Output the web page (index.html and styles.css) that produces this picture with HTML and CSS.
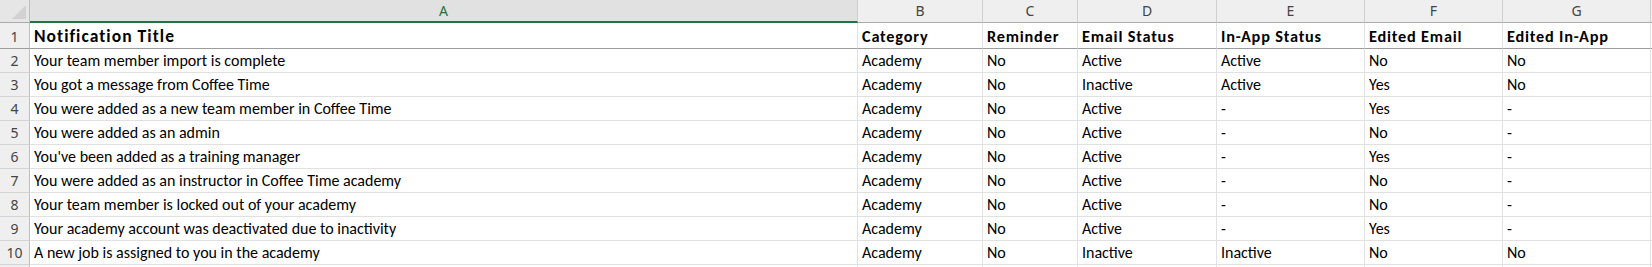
FILE: index.html
```html
<!DOCTYPE html>
<html>
<head>
<meta charset="utf-8">
<link rel="stylesheet" href="styles.css">
</head>
<body>
<div class="sheet">
  <div class="corner"><span class="tri"></span></div>
  <div class="colhead sel">A</div>
  <div class="colhead">B</div>
  <div class="colhead">C</div>
  <div class="colhead">D</div>
  <div class="colhead">E</div>
  <div class="colhead">F</div>
  <div class="colhead">G</div>
  <div class="colhead rest"></div>

  <div class="rowhead r1">1</div>
  <div class="cell hd big">Notification Title</div>
  <div class="cell hd">Category</div>
  <div class="cell hd">Reminder</div>
  <div class="cell hd">Email Status</div>
  <div class="cell hd">In-App Status</div>
  <div class="cell hd">Edited Email</div>
  <div class="cell hd">Edited In-App</div>
  <div class="cell hd rest"></div>

  <div class="rowhead">2</div>
  <div class="cell">Your team member import is complete</div>
  <div class="cell">Academy</div>
  <div class="cell">No</div>
  <div class="cell">Active</div>
  <div class="cell">Active</div>
  <div class="cell">No</div>
  <div class="cell">No</div>
  <div class="cell rest"></div>

  <div class="rowhead">3</div>
  <div class="cell">You got a message from Coffee Time</div>
  <div class="cell">Academy</div>
  <div class="cell">No</div>
  <div class="cell">Inactive</div>
  <div class="cell">Active</div>
  <div class="cell">Yes</div>
  <div class="cell">No</div>
  <div class="cell rest"></div>

  <div class="rowhead">4</div>
  <div class="cell">You were added as a new team member in Coffee Time</div>
  <div class="cell">Academy</div>
  <div class="cell">No</div>
  <div class="cell">Active</div>
  <div class="cell">-</div>
  <div class="cell">Yes</div>
  <div class="cell">-</div>
  <div class="cell rest"></div>

  <div class="rowhead">5</div>
  <div class="cell">You were added as an admin</div>
  <div class="cell">Academy</div>
  <div class="cell">No</div>
  <div class="cell">Active</div>
  <div class="cell">-</div>
  <div class="cell">No</div>
  <div class="cell">-</div>
  <div class="cell rest"></div>

  <div class="rowhead">6</div>
  <div class="cell">You've been added as a training manager</div>
  <div class="cell">Academy</div>
  <div class="cell">No</div>
  <div class="cell">Active</div>
  <div class="cell">-</div>
  <div class="cell">Yes</div>
  <div class="cell">-</div>
  <div class="cell rest"></div>

  <div class="rowhead">7</div>
  <div class="cell">You were added as an instructor in Coffee Time academy</div>
  <div class="cell">Academy</div>
  <div class="cell">No</div>
  <div class="cell">Active</div>
  <div class="cell">-</div>
  <div class="cell">No</div>
  <div class="cell">-</div>
  <div class="cell rest"></div>

  <div class="rowhead">8</div>
  <div class="cell">Your team member is locked out of your academy</div>
  <div class="cell">Academy</div>
  <div class="cell">No</div>
  <div class="cell">Active</div>
  <div class="cell">-</div>
  <div class="cell">No</div>
  <div class="cell">-</div>
  <div class="cell rest"></div>

  <div class="rowhead">9</div>
  <div class="cell">Your academy account was deactivated due to inactivity</div>
  <div class="cell">Academy</div>
  <div class="cell">No</div>
  <div class="cell">Active</div>
  <div class="cell">-</div>
  <div class="cell">Yes</div>
  <div class="cell">-</div>
  <div class="cell rest"></div>

  <div class="rowhead">10</div>
  <div class="cell">A new job is assigned to you in the academy</div>
  <div class="cell">Academy</div>
  <div class="cell">No</div>
  <div class="cell">Inactive</div>
  <div class="cell">Inactive</div>
  <div class="cell">No</div>
  <div class="cell">No</div>
  <div class="cell rest"></div>

  <div class="rowhead tail"></div>
  <div class="cell tail"></div>
  <div class="cell tail"></div>
  <div class="cell tail"></div>
  <div class="cell tail"></div>
  <div class="cell tail"></div>
  <div class="cell tail"></div>
  <div class="cell tail"></div>
  <div class="cell tail rest"></div>
</div>
</body>
</html>
```

FILE: styles.css
```css
html, body {
  margin: 0;
  padding: 0;
  background: #ffffff;
}

.sheet {
  display: grid;
  grid-template-columns: 30px 828px 125px 95px 139px 148px 138px 148px 1fr;
  grid-template-rows: 23px 26px repeat(9, 24px) 2px;
  width: 1652px;
  height: 267px;
  overflow: hidden;
  font-family: Carlito, Calibri, Lato, "Liberation Sans", sans-serif;
  font-size: 16px;
  color: #000000;
}

.corner {
  position: relative;
  background: #e6e6e6;
  border-right: 1px solid #bfbfbf;
  border-bottom: 1px solid #ababab;
  box-sizing: border-box;
}

.tri {
  position: absolute;
  right: 3px;
  bottom: 3px;
  width: 0;
  height: 0;
  border-left: 14px solid transparent;
  border-bottom: 14px solid #d2d2d2;
}

.colhead {
  box-sizing: border-box;
  background: #efefef;
  border-right: 1px solid #d0d0d0;
  border-bottom: 1px solid #ababab;
  font-family: "Noto Sans", "Open Sans", sans-serif;
  font-size: 14px;
  color: #444444;
  text-align: center;
  line-height: 22px;
}

.colhead.sel {
  background: #e1e1e1;
  color: #217346;
  border-bottom: 2px solid #217346;
}

.colhead.rest {
  border-right: none;
}

.rowhead {
  box-sizing: border-box;
  background: #efefef;
  border-right: 1px solid #bfbfbf;
  border-bottom: 1px solid #d4d4d4;
  font-family: "Noto Sans", "Open Sans", sans-serif;
  font-size: 14px;
  color: #444444;
  text-align: center;
  line-height: 23px;
}

.rowhead.r1 {
  line-height: 27px;
  border-bottom: 1px solid #9c9c9c;
}

.cell {
  box-sizing: border-box;
  border-right: 1px solid #e1e1e1;
  border-bottom: 1px solid #e1e1e1;
  padding: 0 0 0 4px;
  white-space: nowrap;
  overflow: hidden;
  line-height: 24px;
}

.cell.hd {
  font-weight: bold;
  font-size: 16.3px;
  letter-spacing: 0.8px;
  border-bottom: 1px solid #9c9c9c;
  line-height: 27px;
}

.cell.big {
  font-size: 17.5px;
  letter-spacing: 1.05px;
}

.cell.rest {
  border-right: none;
}

.rowhead.tail,
.cell.tail {
  border-bottom: none;
}
```
